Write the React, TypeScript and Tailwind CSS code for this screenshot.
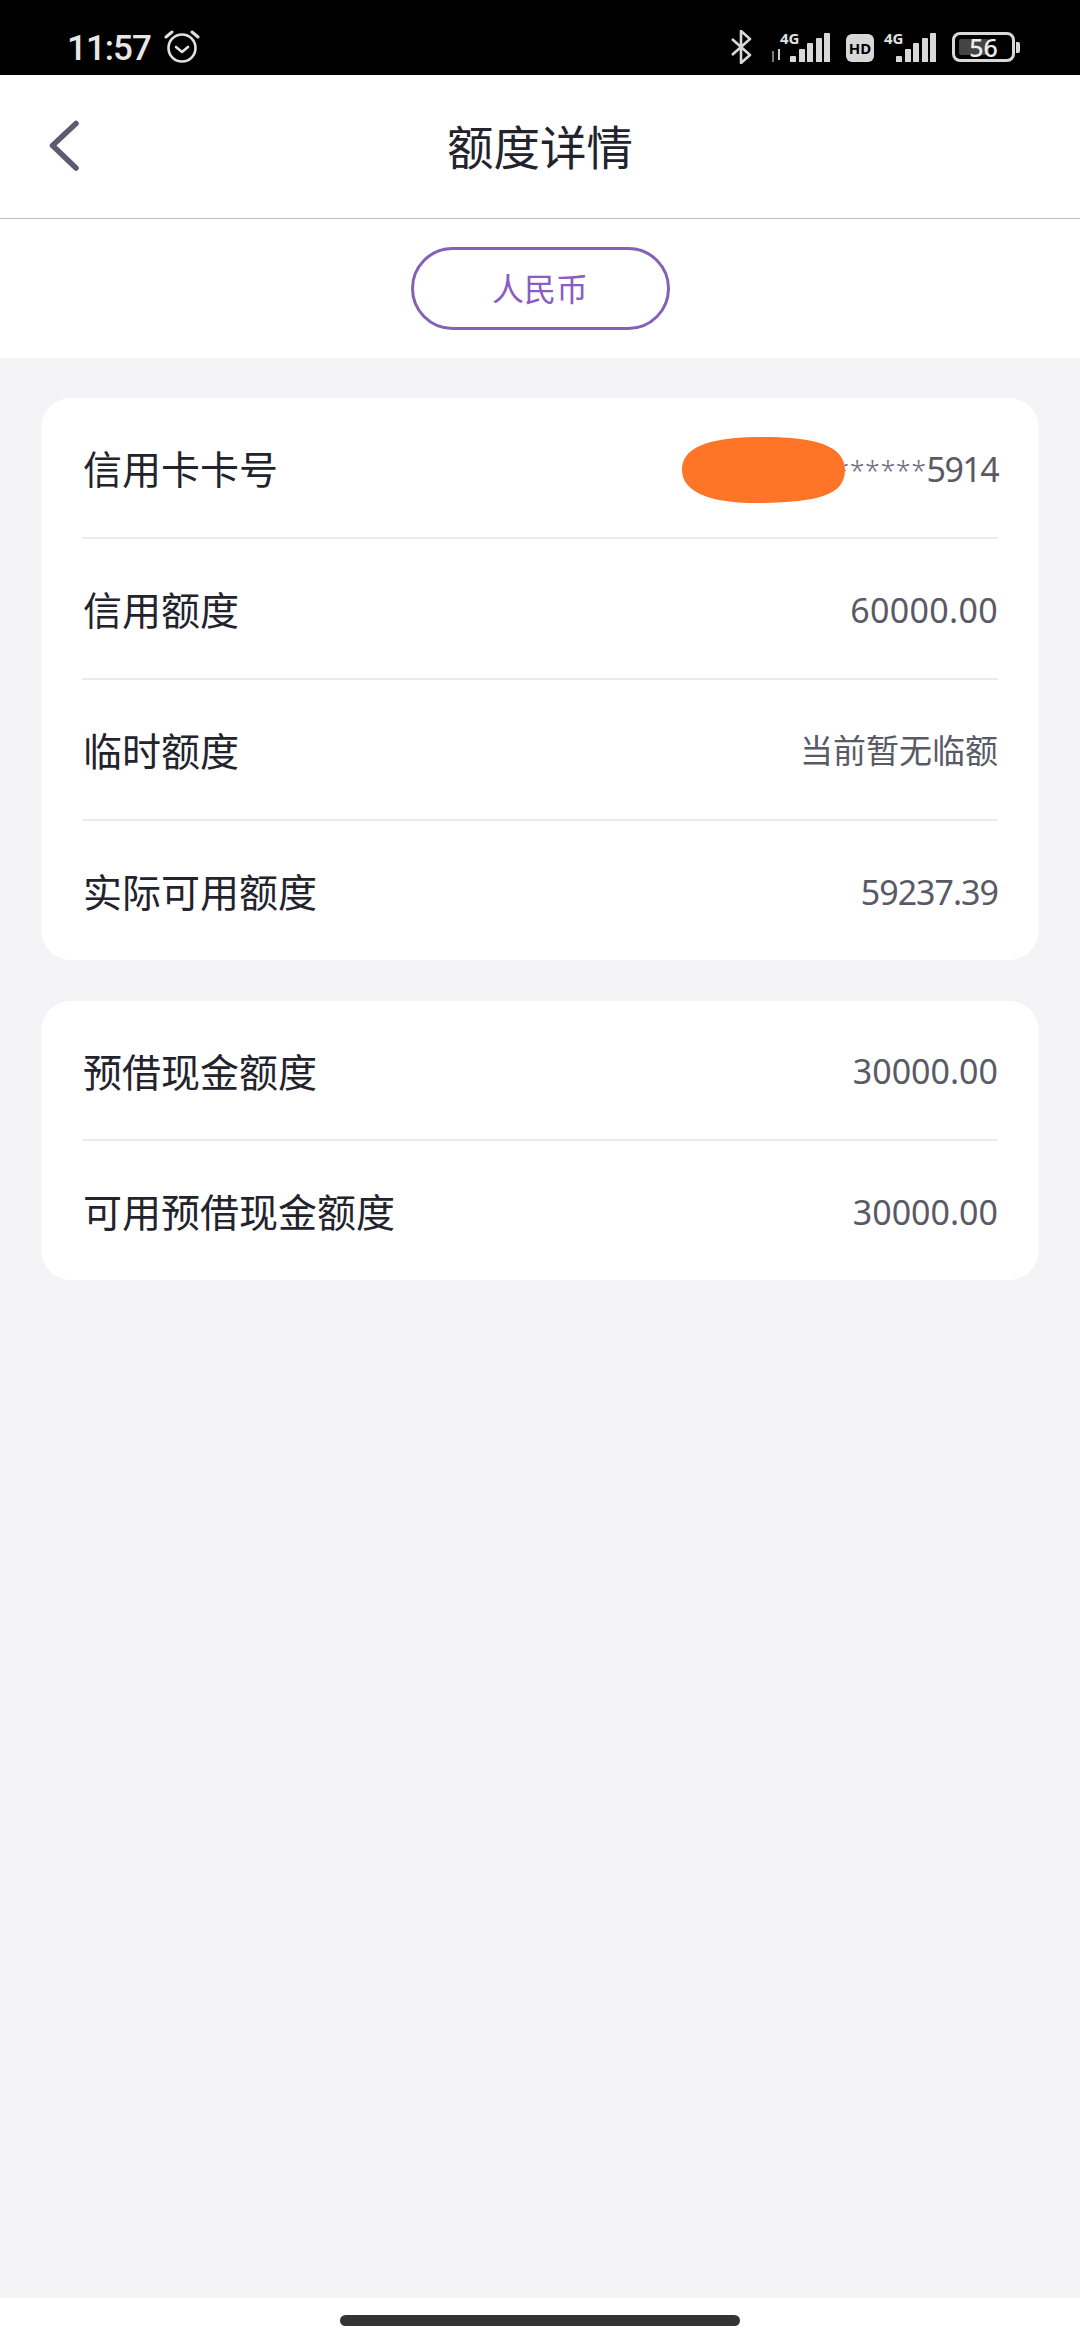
import React from "react";

const font = { fontFamily: '"Noto Sans", "Noto Sans CJK SC", sans-serif' };

function Bars({ heights }: { heights: number[] }) {
  return (
    <div className="flex items-end gap-[2.5px] h-[29px]">
      {heights.map((h, i) => (
        <div key={i} className="w-[6px] bg-[#d8d8d8] rounded-t-[1px]" style={{ height: h }} />
      ))}
    </div>
  );
}

function StatusBar() {
  return (
    <div className="h-[75px] bg-black flex items-end pl-[67px] pr-[60px] pb-[13px] text-[#e6e6e6] shrink-0">
      <span className="text-[35px] font-medium tracking-[-1px] leading-[28px] w-[82px] mb-[-1px]" style={{ fontFamily: "Roboto, sans-serif" }}>11:57</span>
      <svg className="ml-[15px] mb-[-1px]" width="36" height="34" viewBox="0 0 36 34" fill="none" stroke="#e0e0e0" strokeLinecap="round">
        <circle cx="18" cy="19" r="13.5" strokeWidth="2.6" />
        <path d="M12 18l6 5 6-5" strokeWidth="2.6" strokeLinejoin="round" />
        <path d="M2 8l6-5M34 8l-6-5" strokeWidth="3" />
      </svg>
      <div className="ml-auto flex items-end h-[34px]">
        <svg width="22" height="34" viewBox="0 0 22 34" fill="none" stroke="#d8d8d8" strokeWidth="2.6" strokeLinejoin="round" className="mr-[26px] mb-[-2px]">
          <path d="M2 9l18 16-9 8V1l9 8L2 25" />
        </svg>
        <div className="relative w-[52px] h-[29px] mr-[16px]">
          <span className="absolute left-[2px] top-[-2px] text-[15px] font-bold leading-none text-[#e0e0e0]">4G</span>
          <div className="absolute right-0 bottom-0">
            <Bars heights={[6, 13, 19, 24, 29]} />
          </div>
          <svg className="absolute left-[-8px] bottom-0" width="12" height="13" viewBox="0 0 12 13" fill="none" strokeWidth="2">
            <path d="M3 2v11" stroke="#777" />
            <path d="M9 0v11" stroke="#ccc" />
          </svg>
        </div>
        <div className="w-[28px] h-[28px] rounded-[6px] bg-[#d8d8d8] flex items-center justify-center text-black text-[15px] font-bold leading-none mr-[10px]">
          HD
        </div>
        <div className="relative w-[52px] h-[29px] mr-[16px]">
          <span className="absolute left-0 top-[-2px] text-[15px] font-bold leading-none text-[#e0e0e0]">4G</span>
          <div className="absolute right-0 bottom-0">
            <Bars heights={[6, 13, 19, 24, 29]} />
          </div>
        </div>
        <div className="w-[63px] h-[30px] rounded-[8px] border-[3px] border-[#d8d8d8] relative flex items-center">
          <div className="absolute left-[4px] top-[4px] bottom-[4px] w-[30px] rounded-[2px] bg-[#444]" />
          <span className="relative w-full text-center text-[25px] font-medium leading-none text-[#eee]">56</span>
        </div>
        <div className="w-[4px] h-[11px] rounded-r-[2px] bg-[#d8d8d8] ml-[1px] mb-[9px]" />
      </div>
    </div>
  );
}

function Row({
  label,
  value,
  rowClass,
  valueClass,
}: {
  label: string;
  value: React.ReactNode;
  rowClass: string;
  valueClass?: string;
}) {
  return (
    <div className={`flex items-center justify-between pt-[2px] ${rowClass}`}>
      <span className="text-[39px] leading-none text-[#23232d] ml-[1px]">{label}</span>
      <span className={`leading-none text-[#5a5a66] ${valueClass ?? "text-[33px]"}`}>{value}</span>
    </div>
  );
}

export default function App() {
  return (
    <div className="w-[1080px] h-[2340px] flex flex-col bg-[#f4f4f6] overflow-hidden" style={font}>
      <StatusBar />
      <header className="h-[144px] pt-[2px] bg-white border-b border-[#bdbdbd] relative flex items-center justify-center shrink-0">
        <svg className="absolute left-[48px] top-[44px]" width="34" height="56" viewBox="0 0 34 56" fill="none" stroke="#5f5a72" strokeWidth="5.5" strokeLinecap="round" strokeLinejoin="round">
          <path d="M28 4.5L4.5 26.5 28 49" />
        </svg>
        <h1 className="text-[46.5px] leading-none font-normal text-[#23232d]">额度详情</h1>
      </header>
      <div className="h-[139px] bg-white flex items-start justify-center pt-[28px] shrink-0">
        <div className="w-[259px] h-[83px] rounded-full border-[3px] border-[#8560b8] flex items-center justify-center text-[32px] text-[#8a5cc4] leading-none">
          人民币
        </div>
      </div>
      <main className="flex-1 px-[41px] pt-[40px] flex flex-col gap-[41px]">
        <section className="bg-white rounded-[30px] px-[41px]">
          <div className="relative">
            <Row
              label="信用卡卡号"
              rowClass="h-[141px] border-b-2 border-[#ebebeb]"
              valueClass="text-[34px] tracking-[-1.6px]"
              value={
                <>
                  <span className="inline-block text-[27px] font-light tracking-[0.5px] text-[#6a6a76] -translate-y-[1px]">**********</span>
                  5914
                </>
              }
            />
            <svg className="absolute left-[599px] top-[38px]" width="165" height="68" viewBox="0 0 165 68" aria-hidden="true">
              <path d="M1 34C1 12 25 2 75 1c55-1 89 7 89 33s-29 32-84 33C30 68 1 56 1 34Z" fill="#ff7527" />
            </svg>
          </div>
          <Row label="信用额度" value="60000.00" rowClass="h-[141px] border-b-2 border-[#ebebeb]" valueClass="text-[34px] tracking-[0.3px]" />
          <Row label="临时额度" value="当前暂无临额" rowClass="h-[141px] border-b-2 border-[#ebebeb]" />
          <Row label="实际可用额度" value="59237.39" rowClass="h-[139px]" valueClass="text-[34px] tracking-[-1px]" />
        </section>
        <section className="bg-white rounded-[30px] px-[41px]">
          <Row label="预借现金额度" value="30000.00" rowClass="h-[140px] border-b-2 border-[#ebebeb]" valueClass="text-[34px]" />
          <Row label="可用预借现金额度" value="30000.00" rowClass="h-[139px]" valueClass="text-[34px]" />
        </section>
      </main>
      <footer className="h-[42px] bg-white flex items-start justify-center pt-[17px] shrink-0">
        <div className="w-[400px] h-[11px] rounded-full bg-[#333]" />
      </footer>
    </div>
  );
}
